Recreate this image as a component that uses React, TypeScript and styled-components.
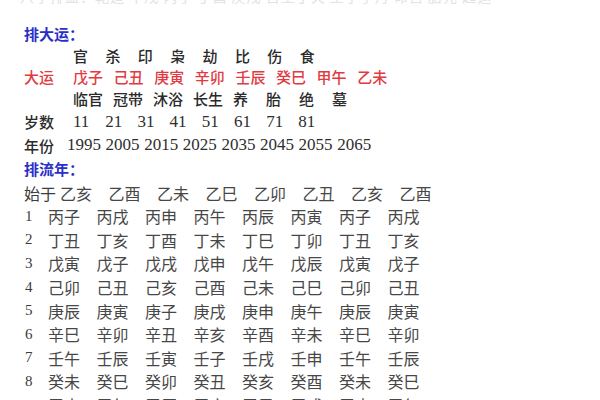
import React from "react";
import styled, { createGlobalStyle } from "styled-components";

const Global = createGlobalStyle`
  html, body { margin: 0; padding: 0; background: #ffffff; }
  body { font-family: "Noto Sans CJK SC", "Noto Sans", sans-serif; }
`;

const Page = styled.div`
  width: 600px;
  height: 400px;
  overflow: hidden;
  padding-left: 24px;
  box-sizing: border-box;
`;

const TopClip = styled.div`
  height: 5px;
  overflow: hidden;
  margin-left: -4px;
`;

const FaintLine = styled.div`
  margin-top: -12px;
  font-size: 14px;
  line-height: 16px;
  color: #e2e2e2;
  white-space: nowrap;
  letter-spacing: 1px;
`;

const Heading = styled.div<{ $h: number; $mt?: number }>`
  height: ${(p) => p.$h}px;
  line-height: ${(p) => p.$h}px;
  margin-top: ${(p) => p.$mt ?? 0}px;
  font-size: 15px;
  font-weight: 700;
  color: #2a2fc8;
`;

const Row = styled.div<{ $h: number }>`
  display: flex;
  align-items: center;
  height: ${(p) => p.$h}px;
  white-space: nowrap;
`;

const Label = styled.div<{ $w: number; $red?: boolean }>`
  width: ${(p) => p.$w}px;
  flex-shrink: 0;
  font-size: 15px;
  font-weight: 500;
  color: ${(p) => (p.$red ? "#e23a42" : "#2a2a2a")};
`;

const Cell = styled.div<{ $w: number; $red?: boolean }>`
  width: ${(p) => p.$w}px;
  flex-shrink: 0;
  font-size: 15px;
  font-weight: 500;
  color: ${(p) => (p.$red ? "#e23a42" : "#2a2a2a")};
`;

const Num = styled.div<{ $w: number }>`
  width: ${(p) => p.$w}px;
  flex-shrink: 0;
  font-family: "Liberation Serif", "Times New Roman", serif;
  font-size: 17px;
  color: #2e2e2e;
`;

const TLabel = styled.div<{ $w: number; $serif?: boolean }>`
  width: ${(p) => p.$w}px;
  flex-shrink: 0;
  font-family: ${(p) =>
    p.$serif
      ? `"Liberation Serif", "Times New Roman", serif`
      : `"Noto Sans CJK SC", sans-serif`};
  font-size: ${(p) => (p.$serif ? 15 : 16)}px;
  color: #3c3c3c;
  padding-left: ${(p) => (p.$serif ? 1 : 0)}px;
  box-sizing: border-box;
`;

const TCell = styled.div`
  width: 48.5px;
  flex-shrink: 0;
  font-size: 16px;
  color: #474747;
`;

const shishen = ["官", "杀", "印", "枭", "劫", "比", "伤", "食"];
const dayun = ["戊子", "己丑", "庚寅", "辛卯", "壬辰", "癸巳", "甲午", "乙未"];
const changsheng = ["临官", "冠带", "沐浴", "长生", "养", "胎", "绝", "墓"];
const ages = ["11", "21", "31", "41", "51", "61", "71", "81"];
const years = ["1995", "2005", "2015", "2025", "2035", "2045", "2055", "2065"];
const startRow = ["乙亥", "乙酉", "乙未", "乙巳", "乙卯", "乙丑", "乙亥", "乙酉"];

const gan = ["丙", "丁", "戊", "己", "庚", "辛", "壬", "癸", "甲"];
const zhi = ["子", "丑", "寅", "卯", "辰", "巳", "午", "未", "申", "酉", "戌", "亥"];
const colStart = [0, 10, 8, 6, 4, 2, 0, 10];

const liunian = gan.map((g, r) => colStart.map((s) => g + zhi[(s + r) % 12]));

const RH = 23.6;

export default function App() {
  return (
    <Page>
      <Global />
      <TopClip>
        <FaintLine>
          八字排盘：乾造 甲戌 丙子 丁酉 庚戌 日主丁火 生于子月 命宫 胎元 起运
        </FaintLine>
      </TopClip>
      <Heading $h={23} $mt={16.5}>
        排大运：
      </Heading>
      <Row $h={21}>
        <Label $w={49} />
        {shishen.map((s) => (
          <Cell key={s} $w={32.4}>
            {s}
          </Cell>
        ))}
      </Row>
      <Row $h={21}>
        <Label $w={49} $red>
          大运
        </Label>
        {dayun.map((s) => (
          <Cell key={s} $w={40.6} $red>
            {s}
          </Cell>
        ))}
      </Row>
      <Row $h={RH}>
        <Label $w={49} />
        {changsheng.map((s) => (
          <Cell key={s} $w={s.length === 2 ? 40 : 33}>
            {s}
          </Cell>
        ))}
      </Row>
      <Row $h={RH}>
        <Label $w={49}>岁数</Label>
        {ages.map((s) => (
          <Num key={s} $w={32.2}>
            {s}
          </Num>
        ))}
      </Row>
      <Row $h={RH}>
        <Label $w={43}>年份</Label>
        {years.map((s) => (
          <Num key={s} $w={38.6}>
            {s}
          </Num>
        ))}
      </Row>
      <Heading $h={RH}>排流年：</Heading>
      <Row $h={RH}>
        <TLabel $w={36}>始于</TLabel>
        {startRow.map((s, i) => (
          <TCell key={i}>{s}</TCell>
        ))}
      </Row>
      {liunian.map((row, r) => (
        <Row $h={RH} key={r}>
          <TLabel $w={24} $serif>
            {r + 1}
          </TLabel>
          {row.map((s, i) => (
            <TCell key={i}>{s}</TCell>
          ))}
        </Row>
      ))}
    </Page>
  );
}
